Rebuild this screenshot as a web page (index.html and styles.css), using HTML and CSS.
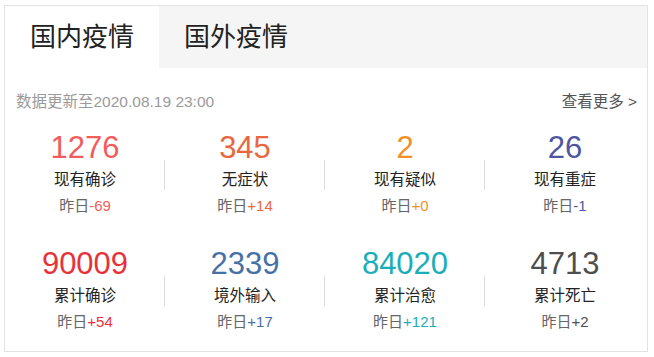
FILE: index.html
```html
<!DOCTYPE html>
<html lang="zh-CN">
<head>
  <meta charset="UTF-8" />
  <meta name="viewport" content="width=device-width, initial-scale=1.0"/>
  <title>疫情数据</title>
  <link rel="stylesheet" href="styles.css">
</head>
<body>
  <div class="panel">
    <div class="tabs">
      <div class="tab active">国内疫情</div>
      <div class="tab">国外疫情</div>
    </div>

    <div class="meta">
      <span class="update">数据更新至2020.08.19 23:00</span>
      <a class="more" href="#">查看更多 &gt;</a>
    </div>

    <div class="stats">
      <!-- 第一行 -->
      <div class="stat">
        <div class="num c-confirm">1276</div>
        <div class="label">现有确诊</div>
        <div class="diff">昨日<span class="c-confirm">-69</span></div>
      </div>
      <div class="stat">
        <div class="num c-nosymptom">345</div>
        <div class="label">无症状</div>
        <div class="diff">昨日<span class="c-nosymptom">+14</span></div>
      </div>
      <div class="stat">
        <div class="num c-suspect">2</div>
        <div class="label">现有疑似</div>
        <div class="diff">昨日<span class="c-suspect">+0</span></div>
      </div>
      <div class="stat">
        <div class="num c-severe">26</div>
        <div class="label">现有重症</div>
        <div class="diff">昨日<span class="c-severe">-1</span></div>
      </div>

      <!-- 第二行 -->
      <div class="stat">
        <div class="num c-total">90009</div>
        <div class="label">累计确诊</div>
        <div class="diff">昨日<span class="c-total">+54</span></div>
      </div>
      <div class="stat">
        <div class="num c-import">2339</div>
        <div class="label">境外输入</div>
        <div class="diff">昨日<span class="c-import">+17</span></div>
      </div>
      <div class="stat">
        <div class="num c-heal">84020</div>
        <div class="label">累计治愈</div>
        <div class="diff">昨日<span class="c-heal">+121</span></div>
      </div>
      <div class="stat">
        <div class="num c-dead">4713</div>
        <div class="label">累计死亡</div>
        <div class="diff">昨日<span class="c-dead">+2</span></div>
      </div>
    </div>
  </div>
</body>
</html>
```

FILE: styles.css
```css
body {
  font-family: "Liberation Sans", "Noto Sans CJK SC", sans-serif;
  background: #fff;
  color: #222;
  margin: 0;
  padding: 5px 5px 0 4px;
}
.panel {
  border: 1px solid #e3e3e3;
  width: 644px;
  height: 347px;
  box-sizing: border-box;
}
.tabs {
  display: flex;
  background: #f5f5f5;
  height: 62px;
}
.tab {
  width: 154px;
  font-size: 26px;
  line-height: 62px;
  text-align: center;
  color: #222;
}
.tab.active {
  background: #fff;
}
.meta {
  display: flex;
  justify-content: space-between;
  align-items: center;
  padding: 22px 10px 0 11px;
  height: 20px;
  font-size: 15.5px;
}
.update {
  color: #9a9a9a;
}
.more {
  color: #555;
  text-decoration: none;
  font-size: 15.5px;
}
.stats {
  display: grid;
  grid-template-columns: repeat(4, 160px);
  grid-auto-rows: 116px;
  margin-top: 21px;
}
.stat {
  position: relative;
  text-align: center;
}
.stat:not(:nth-child(4n))::after {
  content: "";
  position: absolute;
  right: 0;
  top: 29px;
  width: 1px;
  height: 30px;
  background: #dcdcdc;
}
.num {
  font-size: 31px;
  line-height: 34px;
  height: 34px;
}
.label {
  font-size: 15.5px;
  line-height: 20px;
  margin-top: 5px;
  color: #222;
}
.diff {
  font-size: 15px;
  line-height: 20px;
  margin-top: 6px;
  color: #666;
}
.c-confirm { color: #f25d5b; }
.c-nosymptom { color: #e8673f; }
.c-suspect { color: #f29028; }
.c-severe { color: #4e55a0; }
.c-total { color: #e8323a; }
.c-import { color: #4671a6; }
.c-heal { color: #1aaeb8; }
.c-dead { color: #4e4e4e; }
```
